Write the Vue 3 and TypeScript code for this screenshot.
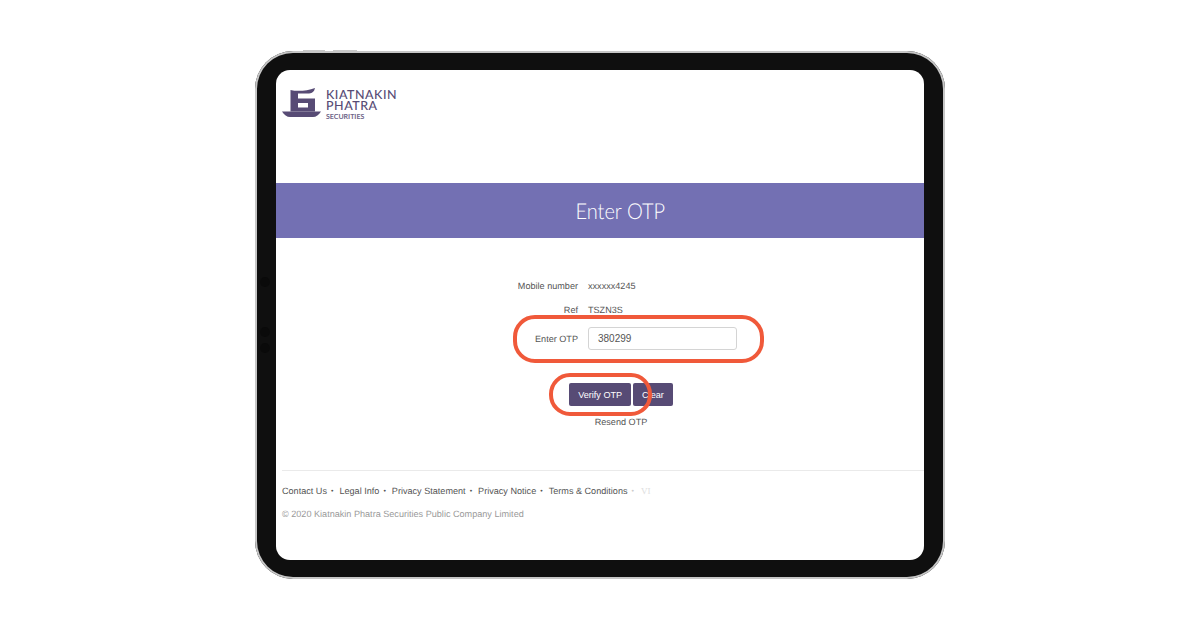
<script setup lang="ts">
const links = ['Contact Us', 'Legal Info', 'Privacy Statement', 'Privacy Notice', 'Terms & Conditions']
</script>

<template>
  <main class="page">
    <div class="tablet">
      <span class="btn-top one"></span>
      <span class="btn-top two"></span>
      <div class="cam cam-a"></div>
      <div class="cam cam-b"></div>
      <div class="cam cam-c"></div>
      <div class="screen">
        <header class="brand">
          <svg class="mark" viewBox="0 0 39 29" width="39" height="29" aria-hidden="true">
            <path
              fill="#574b75"
              d="M8.5 2 C15 3.6 25 3 33 0 L32.2 2.6 C31 4.6 29 5.5 27 5.5 H16 V10.5 H33 V23.5 H26 V15 H16 V19.5 H26 V23.5 H8.5 Z"
            />
            <path fill="#574b75" d="M0 23.5 H39 C37 27 34 29 31 29 H8 C5 29 2 27 0 23.5 Z" />
          </svg>
          <div class="wordmark">
            <span class="w-line">KIATNAKIN<br />PHATRA</span>
            <span class="w-sub">SECURITIES</span>
          </div>
        </header>

        <h1 class="band"><span class="band-text">Enter OTP</span></h1>

        <section class="form">
          <div class="row r-mobile">
            <span class="label">Mobile number</span>
            <span class="value">xxxxxx4245</span>
          </div>
          <div class="row r-ref">
            <span class="label">Ref</span>
            <span class="value">TSZN3S</span>
          </div>
          <div class="row r-otp">
            <label class="label" for="otp">Enter OTP</label>
            <input id="otp" class="otp" type="text" value="380299" />
            <span class="mark-oval oval-input"></span>
          </div>
          <div class="actions">
            <button class="btn" type="button">Verify OTP</button>
            <button class="btn" type="button">Clear</button>
            <span class="mark-oval oval-btn"></span>
          </div>
          <a class="resend">Resend OTP</a>
        </section>

        <footer class="foot">
          <nav class="links">
            <template v-for="l in links" :key="l">
              <a class="link">{{ l }}</a>
              <span class="dot">•</span>
            </template>
            <a class="lang">VI</a>
          </nav>
          <p class="copy">© 2020 Kiatnakin Phatra Securities Public Company Limited</p>
        </footer>
      </div>
    </div>
  </main>
</template>

<style>
html,
body {
  margin: 0;
  background: #fff;
}
</style>

<style scoped>
.page {
  width: 1200px;
  height: 630px;
  display: flex;
  align-items: center;
  justify-content: center;
  background: #fff;
  overflow: hidden;
  font-family: 'Liberation Sans', Arial, sans-serif;
  text-rendering: geometricPrecision;
}

.tablet {
  position: relative;
  box-sizing: border-box;
  width: 690px;
  height: 528px;
  padding: 19px 21px;
  border-radius: 38px;
  background: #0f0f0f;
  box-shadow: inset 0 0 0 2px #c6c6c6;
}

.btn-top {
  position: absolute;
  top: -1px;
  height: 1px;
  background: #c8c8c8;
}
.btn-top.one { left: 48px; width: 22px; }
.btn-top.two { left: 78px; width: 24px; }

.cam {
  position: absolute;
  left: 5px;
  width: 10px;
  height: 10px;
  border-radius: 50%;
  background: #0a0a0a;
}
.cam-a { top: 226px; }
.cam-b { top: 276px; }
.cam-c { top: 292px; }

.screen {
  box-sizing: border-box;
  height: 490px;
  border-radius: 14px;
  background: #fff;
  overflow: hidden;
  display: flex;
  flex-direction: column;
}

.brand {
  box-sizing: border-box;
  height: 113px;
  padding: 18px 0 0 6px;
  display: flex;
  gap: 5px;
  align-items: flex-start;
}
.wordmark {
  display: flex;
  flex-direction: column;
  margin-top: 2px;
  color: #574b75;
  font-family: 'Lato', sans-serif;
  font-weight: 500;
}
.w-line {
  font-size: 12.5px;
  line-height: 10.5px;
  letter-spacing: 0.5px;
}
.w-sub {
  margin-top: 2px;
  font-size: 7px;
  line-height: 8px;
  font-weight: 700;
  color: #6f6689;
}

.band {
  margin: 0;
  padding-left: 41px;
  height: 55px;
  line-height: 55px;
  background: #7370b3;
  color: #fff;
  font-family: 'Lato', sans-serif;
  font-size: 22px;
  font-weight: 300;
  text-align: center;
}
.band-text {
  display: inline-block;
  transform: scaleX(0.91);
}

.form {
  padding-top: 40px;
  display: flex;
  flex-direction: column;
  font-size: 9.1px;
  color: #555;
}
.row {
  position: relative;
  display: grid;
  grid-template-columns: 302px 1fr;
  column-gap: 10px;
  align-items: center;
}
.r-mobile { height: 15px; }
.r-ref { height: 15px; margin-top: 9px; }
.r-otp { height: 23px; margin-top: 10px; }
.label {
  text-align: right;
  color: #555;
}
.value {
  color: #555;
}
.otp {
  box-sizing: border-box;
  width: 149px;
  height: 23px;
  padding: 0 9px;
  border: 1px solid #d4d4d4;
  border-radius: 3px;
  background: #fff;
  font: 10px 'Liberation Sans', Arial, sans-serif;
  color: #555;
  outline: none;
}

.actions {
  position: relative;
  display: flex;
  justify-content: center;
  gap: 2px;
  margin-top: 33px;
  padding-left: 42px;
}
.btn {
  height: 23px;
  padding: 0 9px;
  border: 0;
  border-radius: 2px;
  background: #574b75;
  color: #fff;
  font: 9.1px 'Liberation Sans', Arial, sans-serif;
}

.mark-oval {
  position: absolute;
  box-sizing: border-box;
  border: 4px solid #f0593a;
  pointer-events: none;
}
.oval-input {
  left: 237px;
  top: -12px;
  width: 251px;
  height: 48px;
  border-radius: 22px;
}
.oval-btn {
  left: 273px;
  top: -10px;
  width: 103px;
  height: 43px;
  border-radius: 21px;
}

.resend {
  margin-top: 10px;
  padding-left: 42px;
  text-align: center;
  color: #555;
  line-height: 12px;
}

.foot {
  margin: 42px 0 0 6px;
  border-top: 1px solid #eaeaea;
  padding-top: 14px;
  font-size: 9.1px;
}
.links {
  display: flex;
  align-items: center;
  height: 12px;
  line-height: 12px;
  color: #555;
}
.link {
  color: #555;
}
.dot {
  margin: 0 6px 0 4px;
  font-size: 7px;
  color: #555;
  transform: translateY(1px);
}
.dot:nth-last-child(2) {
  color: #ccc;
}
.lang {
  margin-left: 1px;
  color: #e0e0e0;
  font-family: 'Liberation Serif', serif;
  font-weight: 400;
}
.copy {
  margin: 11px 0 0;
  line-height: 12px;
  color: #9a9a9a;
}
</style>
